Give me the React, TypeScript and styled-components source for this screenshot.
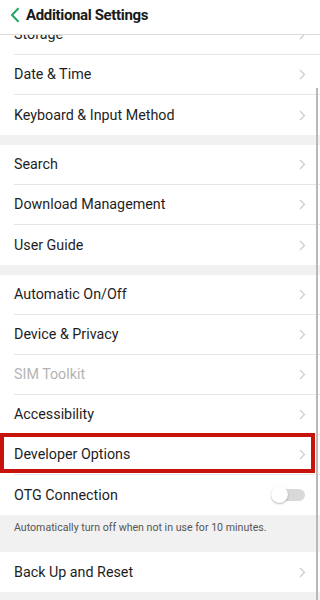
import React from "react";
import styled, { createGlobalStyle } from "styled-components";

const Global = createGlobalStyle`
  html, body { margin: 0; padding: 0; background: #f1f1f1; }
  body { font-family: Roboto, "Noto Sans", "Liberation Sans", sans-serif; }
  * { box-sizing: border-box; }
`;

const Screen = styled.div`
  position: relative;
  width: 320px;
  height: 600px;
  overflow: hidden;
  background: #f1f1f1;
  display: flex;
  flex-direction: column;
`;

const Header = styled.header`
  position: relative;
  z-index: 2;
  height: 35px;
  flex: none;
  display: flex;
  align-items: center;
  gap: 6px;
  padding: 0 0 4px 10px;
  background: #fff;
  border-bottom: 1px solid #dcdcdc;
`;

const Title = styled.h1`
  margin: 0;
  font-size: 15px;
  font-weight: 700;
  color: #1a1a1a;
  letter-spacing: -0.35px;
`;

const Body = styled.div`
  flex: 1;
  overflow: hidden;
`;

const Scroll = styled.div`
  margin-top: -20px;
  display: flex;
  flex-direction: column;
`;

const Group = styled.section`
  background: #fff;
  padding-left: 14px;
`;

const Gap = styled.div<{ $h: number }>`
  height: ${(p) => p.$h}px;
`;

const Row = styled.div<{ $last?: boolean }>`
  position: relative;
  height: 40px;
  display: flex;
  align-items: center;
  padding-right: 14px;
  border-bottom: ${(p) => (p.$last ? "none" : "1px solid #e6e6e6")};
`;

const Label = styled.span<{ $disabled?: boolean }>`
  flex: 1;
  font-size: 14.3px;
  color: ${(p) => (p.$disabled ? "#b4b4b4" : "#1e1e1e")};
  padding-bottom: 1px;
`;

const Note = styled.div`
  height: 37px;
  padding: 6px 14px 0;
  font-size: 10.6px;
  color: #555;
`;

const Highlight = styled.div`
  position: absolute;
  left: -14px;
  right: 5px;
  top: -2px;
  bottom: 1px;
  border: 4px solid #c8120c;
  pointer-events: none;
`;

const Toggle = styled.div`
  position: relative;
  width: 34px;
  height: 18px;
  margin-right: 1px;
  &::before {
    content: "";
    position: absolute;
    left: 6px;
    right: 0;
    top: 3px;
    height: 12px;
    border-radius: 6px;
    background: #d9d9d9;
  }
  &::after {
    content: "";
    position: absolute;
    left: 0;
    top: 0;
    width: 17px;
    height: 17px;
    border-radius: 50%;
    background: #fff;
    box-shadow: 0 1px 2px rgba(0, 0, 0, 0.3);
  }
`;

const ScrollBar = styled.div`
  position: absolute;
  z-index: 3;
  left: 316px;
  width: 2px;
  top: 88px;
  bottom: 0;
  background: #b9b9b9;
`;

const Chevron = () => (
  <svg width="7" height="11" viewBox="0 0 7 11">
    <path d="M1 1 L5.5 5.5 L1 10" fill="none" stroke="#c9c9c9" strokeWidth="1.1" />
  </svg>
);

const Back = () => (
  <svg width="10" height="16" viewBox="0 0 10 16">
    <path d="M8.5 1.2 L2 8 L8.5 14.8" fill="none" stroke="#22a566" strokeWidth="2" />
  </svg>
);

type Item = { label: string; disabled?: boolean; highlight?: boolean; toggle?: boolean };

const Item = ({ item, last }: { item: Item; last?: boolean }) => (
  <Row $last={last}>
    <Label $disabled={item.disabled}>{item.label}</Label>
    {item.toggle ? <Toggle /> : <Chevron />}
    {item.highlight && <Highlight />}
  </Row>
);

const groups: Item[][] = [
  [{ label: "Storage" }, { label: "Date & Time" }, { label: "Keyboard & Input Method" }],
  [{ label: "Search" }, { label: "Download Management" }, { label: "User Guide" }],
  [
    { label: "Automatic On/Off" },
    { label: "Device & Privacy" },
    { label: "SIM Toolkit", disabled: true },
    { label: "Accessibility" },
    { label: "Developer Options", highlight: true },
    { label: "OTG Connection", toggle: true },
  ],
];

export default function App() {
  return (
    <Screen>
      <Global />
      <Header>
        <Back />
        <Title>Additional Settings</Title>
      </Header>
      <Body>
        <Scroll>
          {groups.map((g, gi) => (
            <React.Fragment key={gi}>
              <Group>
                {g.map((it, i) => (
                  <Item key={it.label} item={it} last={i === g.length - 1} />
                ))}
              </Group>
              {gi < 2 && <Gap $h={10} />}
            </React.Fragment>
          ))}
          <Note>Automatically turn off when not in use for 10 minutes.</Note>
          <Group>
            <Item item={{ label: "Back Up and Reset" }} last />
          </Group>
        </Scroll>
      </Body>
      <ScrollBar />
    </Screen>
  );
}
